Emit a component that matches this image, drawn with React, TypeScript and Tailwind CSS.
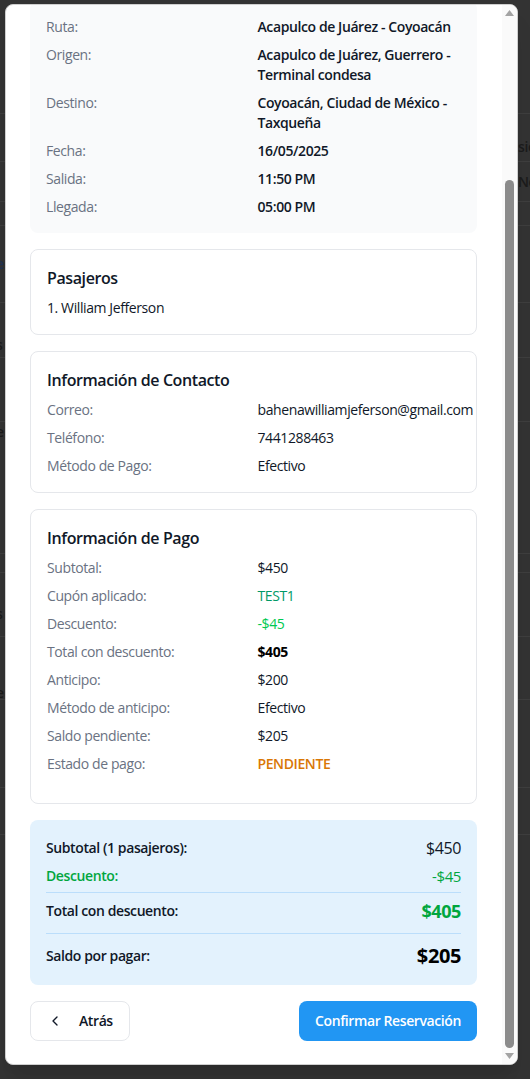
import { ChevronLeft } from "lucide-react";

const tripRows = [
  { label: "Ruta:", value: "Acapulco de Juárez - Coyoacán" },
  { label: "Origen:", value: "Acapulco de Juárez, Guerrero - Terminal condesa" },
  { label: "Destino:", value: "Coyoacán, Ciudad de México - Taxqueña" },
  { label: "Fecha:", value: "16/05/2025" },
  { label: "Salida:", value: "11:50 PM" },
  { label: "Llegada:", value: "05:00 PM" },
];

const contactRows = [
  { label: "Correo:", value: "bahenawilliamjeferson@gmail.com" },
  { label: "Teléfono:", value: "7441288463" },
  { label: "Método de Pago:", value: "Efectivo" },
];

const paymentRows = [
  { label: "Subtotal:", value: "$450", tone: "text-gray-900" },
  { label: "Cupón aplicado:", value: "TEST1", tone: "text-emerald-600" },
  { label: "Descuento:", value: "-$45", tone: "text-green-500" },
  { label: "Total con descuento:", value: "$405", tone: "font-bold text-black" },
  { label: "Anticipo:", value: "$200", tone: "text-gray-900" },
  { label: "Método de anticipo:", value: "Efectivo", tone: "text-gray-900" },
  { label: "Saldo pendiente:", value: "$205", tone: "text-gray-900" },
  { label: "Estado de pago:", value: "PENDIENTE", tone: "font-semibold text-[#d97706]" },
];

// page behind the overlay, only the edges peek out
const backRows = [
  { cls: "h-[114px]", left: "", right: "" },
  { cls: "h-[48px] pt-[18px]", left: "", right: "siento" },
  { cls: "h-[40px]", left: "", right: "No" },
  { cls: "h-[24px]", left: "", right: "" },
  { cls: "h-[77px]", left: "e", right: "" },
  { cls: "h-[55px] pt-[30px]", left: "s", right: "" },
  { cls: "h-[64px]", left: "", right: "" },
  { cls: "h-[132px] items-start", left: "e", right: "" },
  { cls: "h-[19px]", left: "", right: "" },
  { cls: "h-[64px] pt-[18px]", left: "s", right: "" },
  { cls: "h-[63px] pt-[50px]", left: "e", right: "" },
  { cls: "h-[88px]", left: "", right: "" },
  { cls: "h-[47px]", left: "", right: "" },
];

function InfoRow({
  label,
  value,
  tone = "text-gray-900",
}: {
  label: string;
  value: string;
  tone?: string;
}) {
  return (
    <div className="grid grid-cols-2 gap-x-2">
      <span className="text-gray-500">{label}</span>
      <span className={tone}>{value}</span>
    </div>
  );
}

function Card({ title, children }: { title: string; children: React.ReactNode }) {
  return (
    <div className="rounded-lg border border-gray-200 bg-white p-4">
      <h3 className="mb-2 text-base leading-6 font-semibold text-gray-900">{title}</h3>
      {children}
    </div>
  );
}

function ScrollArrow({ down }: { down?: boolean }) {
  return (
    <div className="flex h-4 items-center justify-center">
      <svg width="9" height="6" viewBox="0 0 9 6">
        <polygon points={down ? "0,0 9,0 4.5,6" : "0,6 9,6 4.5,0"} fill="#a3a3a3" />
      </svg>
    </div>
  );
}

export default function App() {
  return (
    <div
      className="relative h-[1079px] w-[530px] overflow-hidden bg-[#333333] text-sm leading-5 tracking-[-0.4px]"
      style={{ fontFamily: '"Open Sans", "Noto Sans", sans-serif' }}
    >
      {/* dimmed page */}
      <div className="flex flex-col">
        {backRows.map((r, i) => (
          <div key={i} className={`flex items-center justify-between border-b border-[#3e3e3e] ${r.cls}`}>
            <span className={`-ml-[4px] font-semibold ${i === 4 ? "text-[#1f3252]" : "text-[#1b1b1b]"}`}>
              {r.left}
            </span>
            <span className="w-[12px] overflow-visible whitespace-nowrap font-semibold text-[#1b1b1b]">
              {r.right}
            </span>
          </div>
        ))}
      </div>

      {/* modal */}
      <div className="absolute top-[4px] left-[5px] flex h-[1061px] w-[513px] overflow-hidden rounded-lg border border-[#cfcfcf] bg-white shadow-xl">
        <div className="flex-1 overflow-hidden px-6 pt-6 pr-[25px] pb-6">
          <div className="-mt-[28px] flex flex-col gap-4">
            <div className="space-y-2 rounded-lg bg-gray-50 p-4">
              {tripRows.map((r) => (
                <InfoRow key={r.label} label={r.label} value={r.value} tone="font-semibold text-gray-900" />
              ))}
            </div>

            <Card title="Pasajeros">
              <p className="text-gray-900">1. William Jefferson</p>
            </Card>

            <Card title="Información de Contacto">
              <div className="space-y-2">
                {contactRows.map((r) => (
                  <InfoRow key={r.label} label={r.label} value={r.value} />
                ))}
              </div>
            </Card>

            <div className="rounded-lg border border-gray-200 bg-white px-4 pt-4 pb-[29px]">
              <h3 className="mb-2 text-base leading-6 font-semibold text-gray-900">Información de Pago</h3>
              <div className="space-y-2">
                {paymentRows.map((r) => (
                  <InfoRow key={r.label} label={r.label} value={r.value} tone={r.tone} />
                ))}
              </div>
            </div>

            <div className="rounded-lg bg-[#e3f2fd] px-4 pt-4 pb-[15px]">
              <div className="flex h-6 items-center justify-between">
                <span className="font-semibold text-gray-900">Subtotal (1 pasajeros):</span>
                <span className="text-base text-gray-900">$450</span>
              </div>
              <div className="mt-1 flex h-6 items-center justify-between text-green-600">
                <span className="font-semibold">Descuento:</span>
                <span className="text-[15px]">-$45</span>
              </div>
              <div className="mt-1 border-t border-[#bbdefb]" />
              <div className="mt-1 flex h-7 items-center justify-between">
                <span className="font-semibold text-gray-900">Total con descuento:</span>
                <span className="text-lg font-bold text-green-600">$405</span>
              </div>
              <div className="mt-2 border-t border-[#bbdefb]" />
              <div className="mt-2 flex h-7 items-center justify-between">
                <span className="font-semibold text-gray-900">Saldo por pagar:</span>
                <span className="text-xl font-bold text-black">$205</span>
              </div>
            </div>

            <div className="flex items-center justify-between">
              <button className="flex h-10 items-center gap-4 rounded-lg border border-gray-200 bg-white px-4 font-semibold text-gray-900">
                <ChevronLeft size={16} strokeWidth={2} />
                Atrás
              </button>
              <button className="h-10 rounded-lg bg-[#2196f3] px-4 font-semibold text-white">
                Confirmar Reservación
              </button>
            </div>
          </div>
        </div>

        {/* scrollbar */}
        <div className="flex w-[15px] flex-col bg-[#fafafa]">
          <ScrollArrow />
          <div className="h-[159px]" />
          <div className="mx-auto w-[9px] flex-1 rounded-full bg-[#8b8b8b]" />
          <ScrollArrow down />
        </div>
      </div>
    </div>
  );
}
